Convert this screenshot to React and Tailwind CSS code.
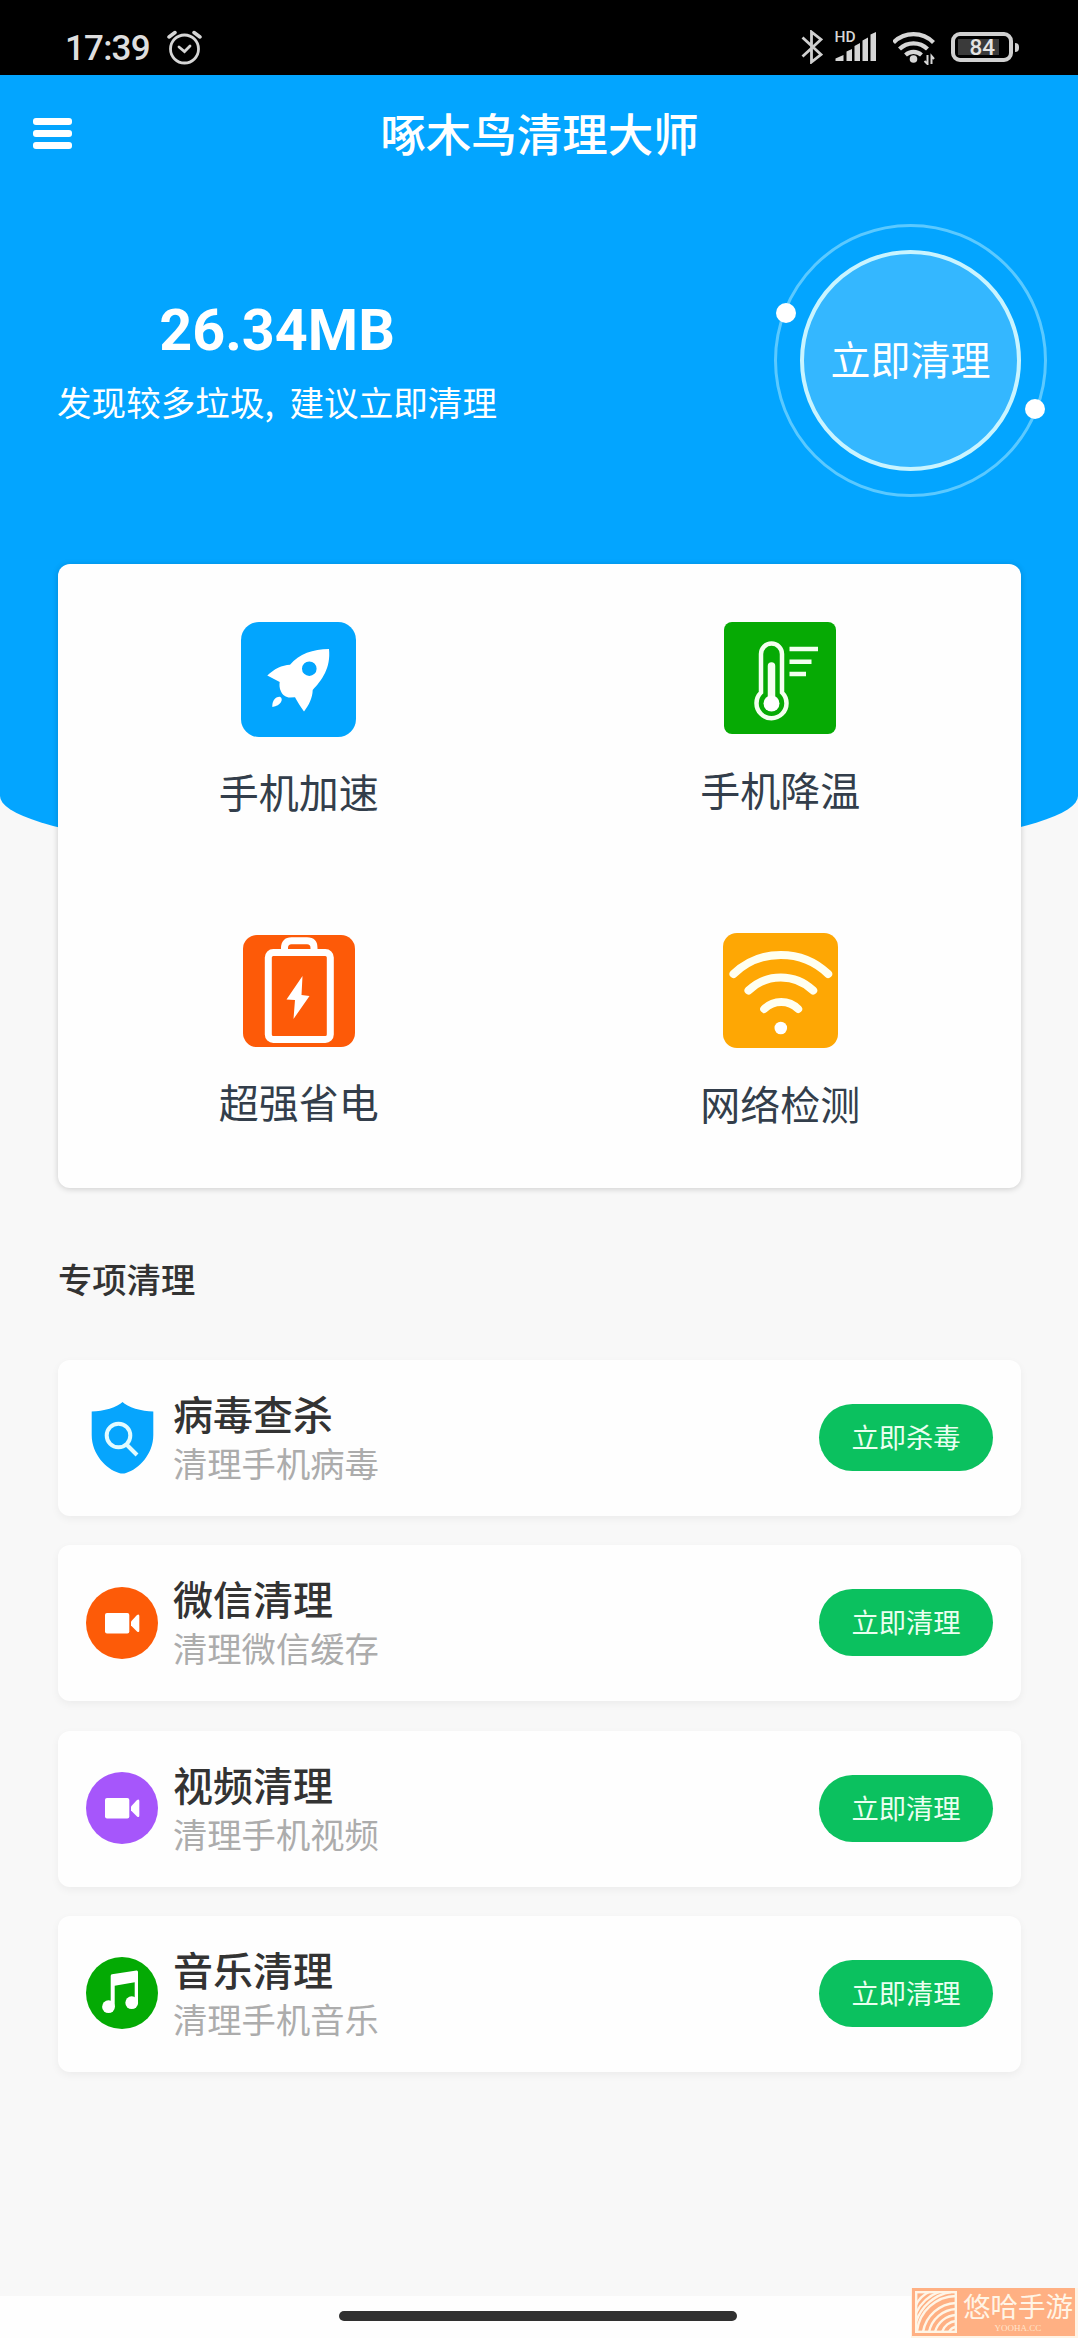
import React from "react";

// === IKON MENU UTAMA ===
const RocketIcon = () => (
  <svg viewBox="0 0 115 115" className="w-full h-full">
    <path
      fill="#fff"
      fillRule="evenodd"
      d="M88 27C72 27 58 32 49 42.7C41 43 33 47 26.3 53.5L38.7 60C38.3 63 38.3 66 40 69.500C41.500 73 45 75.500 49 75.500L54 75.300C56 79 59 84 63 89.500C68 83 71.500 76 71.700 68C81 58 90 46 88 27ZM68.300 39.400a7.300 7.300 0 1 0 0 14.600a7.300 7.300 0 1 0 0-14.600Z"
    />
    <path fill="#fff" d="M31.300 85C31 79 34 74.500 39 74.700C43 77 40 83.500 31.300 85Z" />
  </svg>
);

const ThermometerIcon = () => (
  <svg viewBox="0 0 112 112" className="w-full h-full" fill="none" stroke="#f4fff0" strokeLinecap="round">
    <path strokeWidth="4.500" d="M37 70.500V32a10.500 10.500 0 0 1 21 0V70.500a15 15 0 1 1-21 0Z" />
    <path strokeWidth="7.500" d="M47.500 44V80" />
    <circle cx="47.500" cy="81.500" r="8" fill="#fff" stroke="none" />
    <path strokeWidth="4.500" strokeLinecap="butt" d="M65.500 27H94M65.500 39.700H87.500M65.500 52H82" />
  </svg>
);

const BatteryIcon = () => (
  <svg viewBox="0 0 112 112" className="w-full h-full" fill="none" stroke="#fff" strokeWidth="7">
    <rect x="25.300" y="17.500" width="62" height="87" rx="5" />
    <path d="M41.500 17V13q0-7.200 7-7.200h15.500q7 0 7 7.200v4" />
    <path fill="#fff" stroke="none" d="M59.500 41L43.500 64.500L52 65L50.500 84L66.500 61L58.500 60Z" />
  </svg>
);

const NetworkIcon = () => (
  <svg viewBox="0 0 115 115" className="w-full h-full" fill="none" stroke="#fffff0" strokeWidth="8" strokeLinecap="round">
    <path d="M10.500 41A68.400 68.400 0 0 1 105.200 41" />
    <path d="M25.500 57.500A46.600 46.600 0 0 1 90.200 57.500" />
    <path d="M41.200 76A24 24 0 0 1 75.200 76" />
    <circle cx="57.800" cy="95" r="6.300" fill="#fff" stroke="none" />
  </svg>
);

// === IKON DAFTAR ===
const ShieldIcon = () => (
  <svg viewBox="0 0 72 72" className="w-[72px] h-[72px]">
    <path fill="#06a5fd" d="M36.500 0C41 5 56 9.500 67.300 9.500V33C67.300 52 53 67 40 71Q36.500 72 33 71C20 67 5.700 52 5.700 33V9.500C17 9.500 32 5 36.500 0Z" />
    <circle cx="32.500" cy="33.500" r="11.800" fill="none" stroke="#e2fbff" strokeWidth="4" />
    <path d="M40.500 42.500L51 53" stroke="#e2fbff" strokeWidth="4" />
  </svg>
);

const VideoIcon = ({ color }) => (
  <svg viewBox="0 0 72 72" className="w-[72px] h-[72px]">
    <circle cx="36" cy="36" r="36" fill={color} />
    <rect x="19" y="26" width="24.300" height="20.500" rx="2" fill="#fff" />
    <path fill="#fff" d="M45 34.500L51 28Q53.300 26.500 53.300 29V43.500Q53.300 46 51 44.500L45 38.500Z" />
  </svg>
);

const MusicIcon = () => (
  <svg viewBox="0 0 72 72" className="w-[72px] h-[72px]">
    <circle cx="36" cy="36" r="36" fill="#04aa04" />
    <path fill="#fff" d="M24.700 19Q24.700 17.500 26 17.300L50.500 13.500Q52 13.300 52 15V46.500H48.700V25.300L28.700 28.700V50H24.700Z" />
    <circle cx="22.500" cy="49.700" r="6.400" fill="#fff" />
    <circle cx="45.700" cy="45.700" r="6.400" fill="#fff" />
  </svg>
);

const menus = [
  { title: "手机加速", icon: <RocketIcon />, box: "w-[115px] h-[115px] rounded-[18px] bg-[#02a5fe]", cell: "pt-[58px]", label: "mt-[32px]" },
  { title: "手机降温", icon: <ThermometerIcon />, box: "w-[112px] h-[112px] rounded-[8px] bg-[#06aa04]", cell: "pt-[58px]", label: "mt-[33px]" },
  { title: "超强省电", icon: <BatteryIcon />, box: "w-[112px] h-[112px] rounded-[14px] bg-[#fd5a08]", cell: "pt-[59px]", label: "mt-[32px]" },
  { title: "网络检测", icon: <NetworkIcon />, box: "w-[115px] h-[115px] rounded-[14px] bg-[#fea704]", cell: "pt-[57px]", label: "mt-[33px]" },
];

const cleaners = [
  { title: "病毒查杀", desc: "清理手机病毒", action: "立即杀毒", icon: <ShieldIcon /> },
  { title: "微信清理", desc: "清理微信缓存", action: "立即清理", icon: <VideoIcon color="#fd5b08" /> },
  { title: "视频清理", desc: "清理手机视频", action: "立即清理", icon: <VideoIcon color="#a656fb" /> },
  { title: "音乐清理", desc: "清理手机音乐", action: "立即清理", icon: <MusicIcon /> },
];

function StatusBar() {
  return (
    <div className="h-[75px] bg-black flex items-start justify-between pl-[65px] pr-[59px] text-[#dedede]">
      <div className="flex items-start">
        <span className="mt-[29px] w-[101px] text-[35px] leading-[40px] font-medium tracking-[-0.8px] font-['Roboto',sans-serif]">
          17:39
        </span>
        <svg width="36" height="36" viewBox="0 0 36 36" className="mt-[30px]" fill="none" stroke="#d6d6d6" strokeWidth="2.800" strokeLinecap="round">
          <circle cx="18.500" cy="19" r="14" />
          <path d="M13 17L18.500 21.500L24 16" />
          <path strokeWidth="3.500" d="M3 7L9 2.500M28 2.500L34 7" />
        </svg>
      </div>

      <div className="flex items-start">
        <svg width="22" height="34" viewBox="0 0 22 34" className="mt-[30px] mr-[12px]" fill="none" stroke="#d0d0d0" strokeWidth="2.800">
          <path d="M1.500 7.500L20 24.500L10.500 32V2L20 9.500L1.500 26.500" />
        </svg>
        <svg width="43" height="34" viewBox="0 0 43 34" className="mt-[29px] mr-[15px]" fill="#d6d6d6">
          <text x="-0.500" y="13" fontSize="15.500" fontWeight="500" fontFamily="Roboto, sans-serif">HD</text>
          <path d="M0.500 32V29.500L8.500 26V32ZM11.500 32V22.500L17 20V32ZM19.500 32V17L25 14V32ZM27.500 32V11.500L33 8.500V32ZM35.500 32V5.500L41 3V32Z" />
        </svg>
        <svg width="44" height="34" viewBox="0 0 44 34" className="mt-[31px] mr-[14px]" fill="none" stroke="#d6d6d6" strokeWidth="4.200">
          <path d="M0.500 11.500A28 28 0 0 1 40.500 11.500M6.500 18A20 20 0 0 1 34.500 18M12.500 24A12 12 0 0 1 28.500 24" />
          <circle cx="20.500" cy="28" r="3.800" fill="#d6d6d6" stroke="none" />
          <path strokeWidth="2" d="M34.500 24V33L31.500 30M38.500 33V25L41 28" />
        </svg>
        <div className="mt-[32px] w-[62px] h-[30px] rounded-[9px] border-[4px] border-[#d0d0d0] p-[3px] flex">
          <div className="w-[41px] h-[16px] bg-[#3a3a3a] flex justify-end">
            <span className="mr-[4px] text-[22.500px] leading-[17px] font-medium text-[#e4e4e4] font-['Roboto',sans-serif]">84</span>
          </div>
        </div>
        <div className="mt-[43px] ml-[2px] w-[4px] h-[9px] rounded-r bg-[#d0d0d0]" />
      </div>
    </div>
  );
}

function Header() {
  return (
    <div className="h-[790px] shrink-0 bg-[#03a5ff] text-white rounded-b-[50%_69px]">
      <div className="h-[126px] flex items-center px-[33px]">
        <div className="w-[39px] -mt-[9px] flex flex-col gap-[5px]">
          <div className="h-[7px] rounded-[3px] bg-white" />
          <div className="h-[7px] rounded-[3px] bg-white" />
          <div className="h-[7px] rounded-[3px] bg-white" />
        </div>
        <h1 className="flex-1 mr-[38px] -mt-[12px] text-center text-[45.500px] leading-[60px] font-medium">啄木鸟清理大师</h1>
      </div>

      <div className="flex justify-between pl-[58px] pr-[31px]">
        <div className="mt-[96px] w-[438px] flex flex-col items-center">
          <div className="text-[57.500px] leading-[68px] font-bold font-['Roboto',sans-serif]">26.34MB</div>
          <p className="mt-[11px] flex text-[34.600px] leading-[50px] whitespace-nowrap">
            <span>发现较多垃圾</span>
            <span className="w-[25px]">,</span>
            <span>建议立即清理</span>
          </p>
        </div>

        {/* TOMBOL BULAT */}
        <div className="relative mt-[23px] w-[273px] h-[273px] rounded-full border-[3px] border-[#5bc9ff] flex items-center justify-center">
          <button className="w-[221px] h-[221px] pb-[6px] rounded-full border-[4px] border-[#c9f4ff] bg-[#34b7ff] text-[40px] leading-[56px]">
            立即清理
          </button>
          <span className="absolute left-[-1px] top-[76px] w-[20px] h-[20px] rounded-full bg-white" />
          <span className="absolute right-[-1px] bottom-[75px] w-[20px] h-[20px] rounded-full bg-white" />
        </div>
      </div>
    </div>
  );
}

function App() {
  return (
    <div className="w-[1078px] h-[2338px] overflow-hidden flex flex-col bg-[#f8f8f8] font-['Noto_Sans_CJK_SC',sans-serif]">
      <StatusBar />
      <Header />

      {/* MENU UTAMA */}
      <div className="relative -mt-[301px] ml-[58px] mr-[57px] h-[624px] shrink-0 grid grid-cols-2 grid-rows-[312px_312px] rounded-[12px] bg-[#fefefe] shadow-[0_1px_6px_rgba(0,0,0,0.18)]">
        {menus.map((item) => (
          <div key={item.title} className={`flex flex-col items-center ${item.cell}`}>
            <div className={item.box}>{item.icon}</div>
            <span className={`text-[40px] leading-[44px] text-[#333e4b] ${item.label}`}>{item.title}</span>
          </div>
        ))}
      </div>

      <h2 className="mt-[65px] ml-[58px] text-[34.300px] leading-[50px] font-medium text-[#333]">专项清理</h2>

      {/* DAFTAR PEMBERSIHAN */}
      <div className="mt-[57px] pl-[58px] pr-[57px] flex flex-col gap-[29.300px]">
        {cleaners.map((item) => (
          <div key={item.title} className="h-[156px] flex items-center pl-[28px] pr-[28px] pb-[1px] rounded-[12px] bg-[#fefefe] shadow-[0_3px_8px_rgba(0,0,0,0.05)]">
            {item.icon}
            <div className="ml-[15px] flex-1 flex flex-col pb-[1px]">
              <span className="text-[40px] leading-[51px] font-medium text-[#333]">{item.title}</span>
              <span className="text-[34.300px] leading-[47px] text-[#acacac]">{item.desc}</span>
            </div>
            <button className="w-[174px] h-[67px] pb-[3px] rounded-full bg-[#0bc15f] text-[27.300px] leading-[40px] text-[#eafff0]">
              {item.action}
            </button>
          </div>
        ))}
      </div>

      {/* BILAH NAVIGASI */}
      <div className="mt-auto h-[50px] flex items-start">
        <div className="flex-1 h-full flex items-start bg-[#fefefe] mt-[8px]">
          <div className="mt-[15px] ml-[339px] w-[398px] h-[10px] rounded-full bg-[#303030]" />
        </div>
        <div className="w-[167px] h-[50px] bg-[#fff3e4] pl-[1px] pr-[3px] pb-[2px]">
          <div className="h-[48px] flex items-start bg-[#ffb083] pl-[3px]">
            <svg width="42" height="42" viewBox="0 0 42 42" className="mt-[3px]" fill="none" stroke="#fff5e6" strokeWidth="2.400">
              <rect x="1.200" y="1.200" width="39.600" height="39.600" />
              <path d="M1 14A28 28 0 0 1 14 1M1 22A42 42 0 0 1 24 1M1 31A44 44 0 0 1 36 1M2 40A40 40 0 0 1 41 5M8 41A35 35 0 0 1 41 12M14 41A29 29 0 0 1 41 18M20 41A23 23 0 0 1 41 24M27 41A16 16 0 0 1 41 30M34 41A9 9 0 0 1 41 36" />
            </svg>
            <div className="ml-[6px] flex flex-col items-center text-[#fff5e6] font-['Liberation_Serif','Noto_Sans_CJK_SC',serif]">
              <span className="h-[35px] text-[27.500px] leading-[39px]">悠哈手游</span>
              <span className="text-[9px] leading-[10px] text-[#ffe4cc]">YOOHA.CC</span>
            </div>
          </div>
        </div>
      </div>
    </div>
  );
}

export default App;
